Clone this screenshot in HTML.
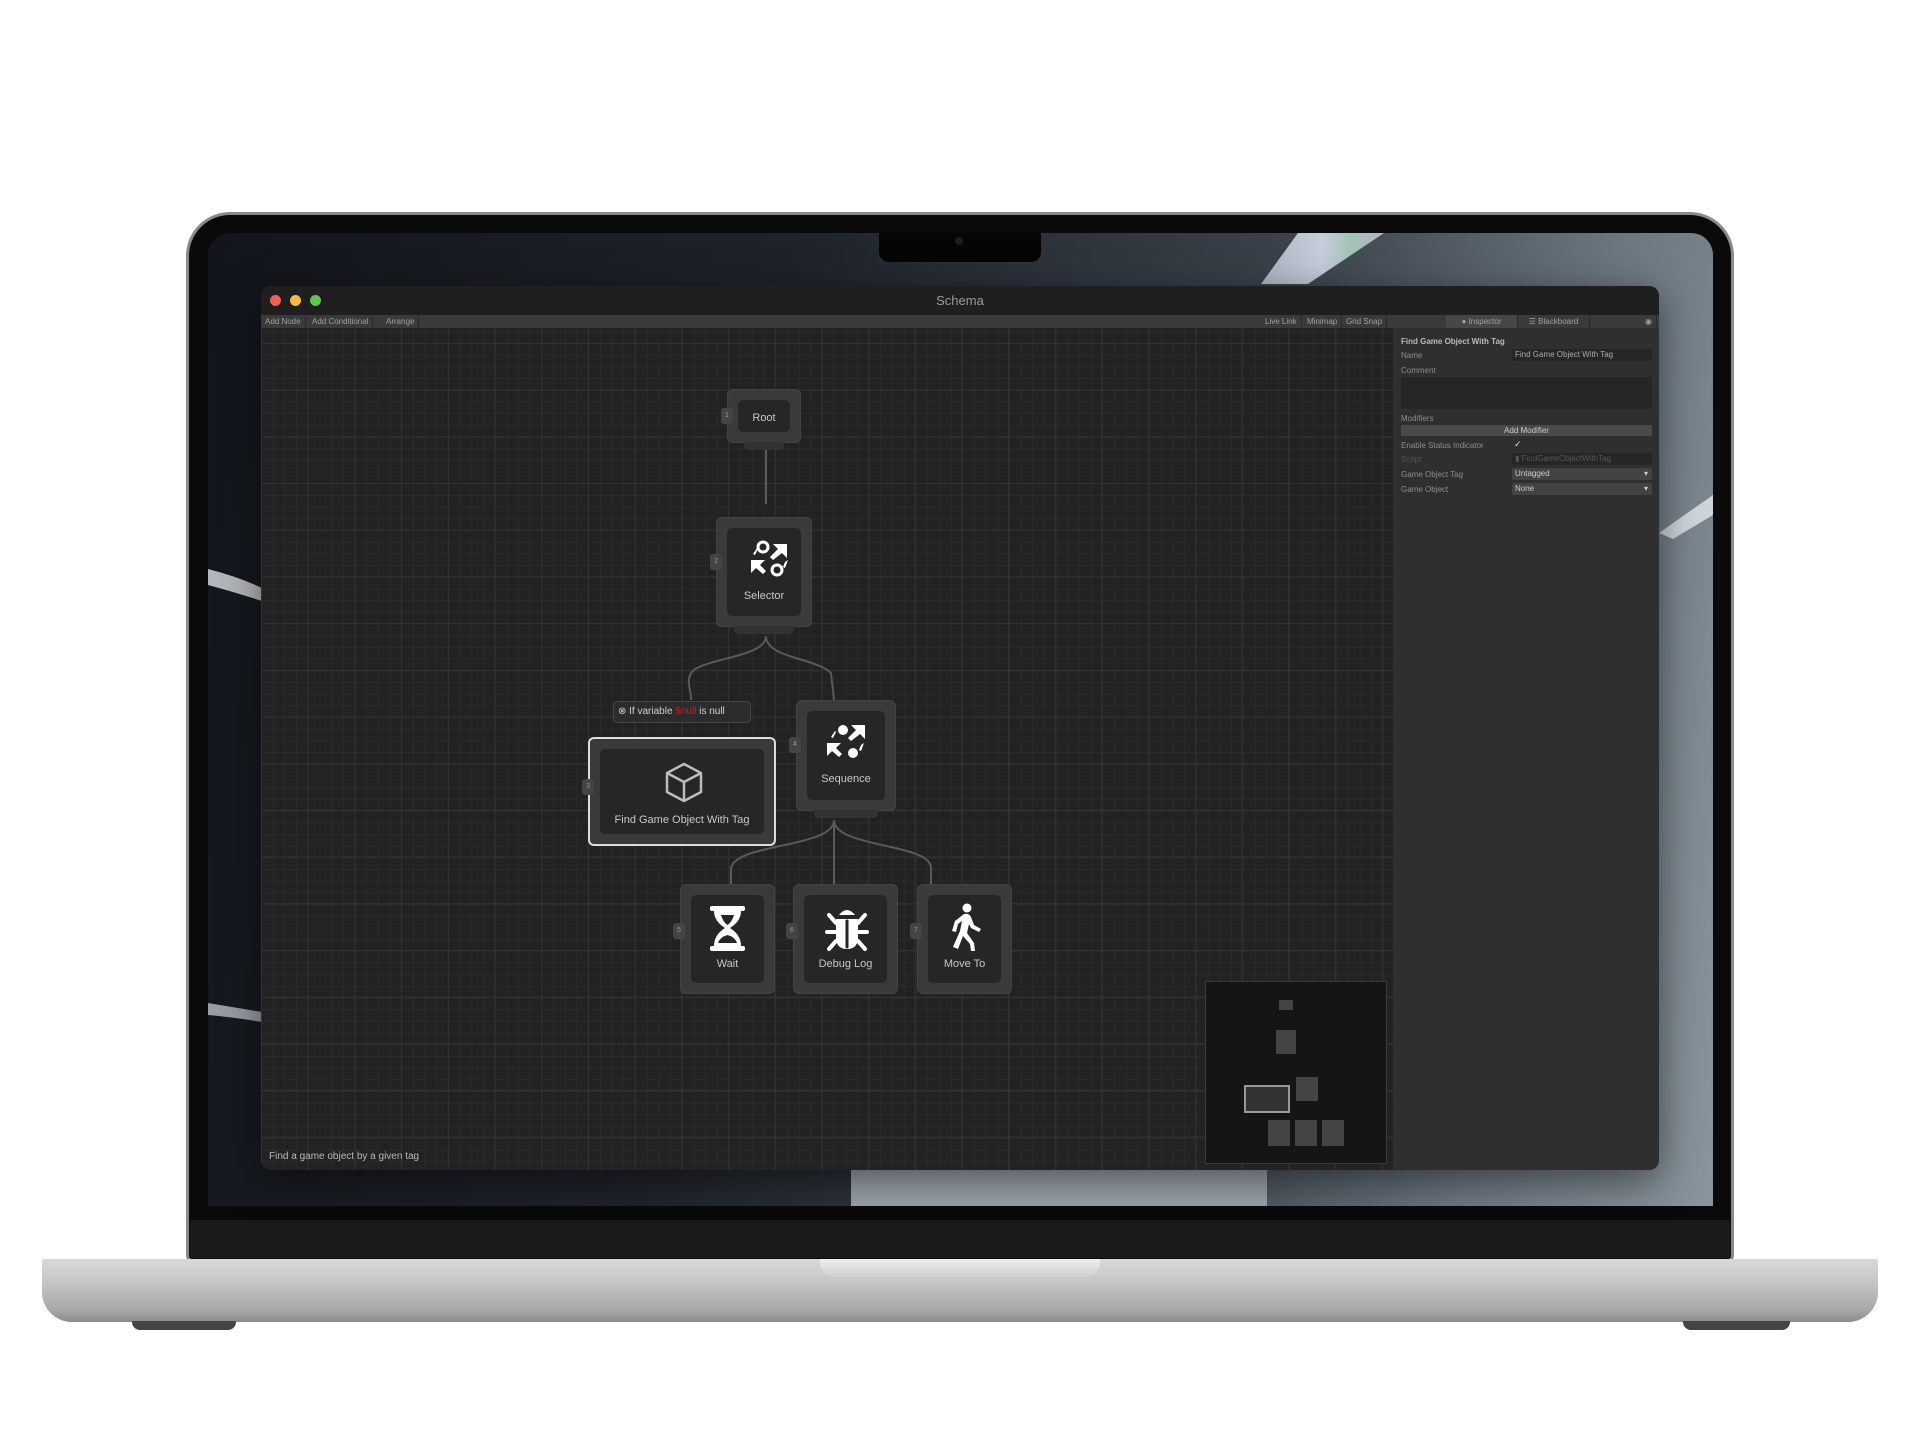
<!DOCTYPE html>
<html><head><meta charset="utf-8"><style>
*{margin:0;padding:0;box-sizing:border-box}
body{width:1920px;height:1440px;background:#fff;position:relative;overflow:hidden;font-family:"Liberation Sans",sans-serif}
.a{position:absolute}
.lid{left:186px;top:212px;width:1548px;height:1050px;background:#0a0a0a;border-radius:44px 44px 6px 6px;border:3px solid #8a8a8a}
.screen{left:208px;top:233px;width:1505px;height:973px;background:linear-gradient(100deg,#12161c 0%,#1e232a 35%,#3a424b 65%,#6d7882 85%,#8a959d 100%);border-radius:22px 22px 0 0;overflow:hidden}
.chin{left:190px;top:1220px;width:1540px;height:38px;background:#1a1a1a}
.base{left:42px;top:1259px;width:1836px;height:63px;background:linear-gradient(#d9d9d9,#c4c4c4 40%,#a8a8a8 80%,#8c8c8c);border-radius:2px 2px 30px 30px}
.win{left:261px;top:286px;width:1398px;height:884px;background:#2a2a2a;border-radius:10px;overflow:hidden;box-shadow:0 10px 40px rgba(0,0,0,.5)}
.title{left:0;top:0;width:1398px;height:29px;background:#1f1f1f;color:#9a9a9a;font-size:13px;text-align:center;line-height:29px}
.tb{top:29px;height:13px;background:#3a3a3a;width:1398px;left:0}
.tb span{position:absolute;top:0;font-size:8px;color:#a0a0a0;line-height:13px;padding:0 4px;border-right:1px solid #2a2a2a}
.canvas{left:0;top:42px;width:1132px;height:842px;background-color:#222;
background-image:linear-gradient(#333 1px,transparent 1px),linear-gradient(90deg,#333 1px,transparent 1px),linear-gradient(#2a2a2a 1px,transparent 1px),linear-gradient(90deg,#2a2a2a 1px,transparent 1px);
background-size:46.7px 46.7px,46.7px 46.7px,11.7px 11.7px,11.7px 11.7px;background-position:0 15px,0 0,0 15px,0 0}
.insp{left:1132px;top:42px;width:266px;height:842px;background:#2f2f2f;color:#9a9a9a;font-size:8px}
.node{position:absolute;background:#3a3a3a;border-radius:6px;border:1px solid #444}
.node .in{position:absolute;left:10px;top:10px;right:10px;bottom:10px;background:#262626;border-radius:5px;color:#c8c8c8;font-size:11px;text-align:center}
.badge{position:absolute;width:12px;height:16px;background:#444;border-radius:3px;color:#999;font-size:7px;line-height:16px;text-align:center}
.lbl{position:absolute;left:0;right:0;text-align:center}
.tab{position:absolute;bottom:-8px;left:50%;transform:translateX(-50%);height:8px;background:#333;border-radius:0 0 4px 4px}
.row{position:absolute;left:8px;font-size:8px;color:#8c8c8c}
.field{position:absolute;left:119px;width:140px;height:12px;background:#262626;border-radius:2px;color:#aaa;font-size:8px;line-height:12px;padding-left:3px}
.dd{background:#434343;color:#ccc}
</style></head><body>
<div class="a lid"></div>
<div class="a screen">
 <svg class="a" style="left:0;top:0" width="1505" height="973">
  <defs><linearGradient id="rb" x1="0" x2="1"><stop offset="0" stop-color="#c9d3e0"/><stop offset=".5" stop-color="#e8f0ff"/><stop offset=".75" stop-color="#b8e0c8"/><stop offset="1" stop-color="#e0c8e8"/></linearGradient></defs>
  <path d="M0 336 Q35 345 60 358 L60 370 Q30 360 0 352Z" fill="#d0d4d8" opacity=".85"/>
  <path d="M0 770 Q30 775 60 780 L60 790 Q25 784 0 782Z" fill="#b8bec4" opacity=".8"/>
  <path d="M1090 0 L1176 0 L1100 51 L1053 51Z" fill="url(#rb)" opacity=".8"/>
  <path d="M1451 300 L1505 262 L1505 282 L1465 306Z" fill="#dde2e6" opacity=".85"/>
  <rect x="643" y="936" width="416" height="37" fill="#9aa3ab"/>
 </svg>
</div>
<div class="a" style="left:879px;top:233px;width:162px;height:29px;background:#050505;border-radius:0 0 10px 10px"></div>
<div class="a" style="left:955px;top:237px;width:8px;height:8px;border-radius:50%;background:#1a1d22"></div>
<div class="a chin"></div>
<div class="a base"></div>
<div class="a" style="left:820px;top:1259px;width:280px;height:18px;background:linear-gradient(#eee,#cfcfcf);border-radius:0 0 14px 14px"></div>
<div class="a" style="left:132px;top:1321px;width:104px;height:9px;background:#444;border-radius:0 0 8px 8px"></div>
<div class="a" style="left:1683px;top:1321px;width:107px;height:9px;background:#444;border-radius:0 0 8px 8px"></div>

<div class="a win">
 <div class="a title">Schema</div>
 <div class="a" style="left:9px;top:9px;width:11px;height:11px;border-radius:50%;background:#ed5f57"></div>
 <div class="a" style="left:29px;top:9px;width:11px;height:11px;border-radius:50%;background:#f4bb3f"></div>
 <div class="a" style="left:49px;top:9px;width:11px;height:11px;border-radius:50%;background:#5fc453"></div>
 <div class="a tb">
  <span style="left:0">Add Node</span><span style="left:47px">Add Conditional</span><span style="left:121px">Arrange</span>
  <span style="left:1000px">Live Link</span><span style="left:1042px">Minimap</span><span style="left:1081px">Grid Snap</span>
  <span style="left:1185px;background:#474747;width:72px;text-align:center">● Inspector</span><span style="left:1257px;width:72px;text-align:center">☰ Blackboard</span><span style="left:1380px">◉</span>
 </div>
 <div class="a canvas">
  <svg class="a" style="left:0;top:0" width="1132" height="842" fill="none" stroke="#5a5a5a" stroke-width="2">
   <path d="M505 116 V176"/>
   <path d="M505 308 C505 330 440 330 430 345 C425 355 430 360 430 372 M505 308 C505 330 555 330 570 345 L573 372"/>
   <path d="M573 492 C573 520 475 515 470 540 V556 M573 492 V556 M573 492 C573 520 670 515 670 540 V556"/>
  </svg>
  <div class="node" style="left:466px;top:61px;width:74px;height:54px"><div class="in"><div class="lbl" style="top:12px">Root</div></div><div class="badge" style="left:-7px;top:18px">1</div><div class="tab" style="width:40px"></div></div>
  <div class="node" style="left:455px;top:189px;width:96px;height:110px"><div class="in">
   <svg class="a" style="left:22px;top:12px" width="44" height="44" fill="#fff"><circle cx="14" cy="7" r="5" fill="none" stroke="#fff" stroke-width="3"/><path d="M4 14 L8 8 L9 9 L6 15Z"/><path d="M24 4 H38 V18 L33 13 L24 20 L21 17 L29 9Z"/><path d="M2 20 H16 L11 25 L17 31 L14 34 L7 28 L2 33Z"/><circle cx="28" cy="30" r="5" fill="none" stroke="#fff" stroke-width="3"/><path d="M36 22 L39 20 L36 28 L34 27Z"/></svg>
   <div class="lbl" style="top:62px">Selector</div></div><div class="badge" style="left:-7px;top:36px">2</div><div class="tab" style="width:60px"></div></div>
  <div class="a" style="left:352px;top:373px;width:138px;height:22px;background:#2c2c2c;border:1px solid #444;border-radius:4px;color:#d0d0d0;font-size:10px;line-height:20px;padding-left:4px">⊗ If variable <span style="color:#d11">$null</span> is null</div>
  <div class="node" style="left:327px;top:409px;width:188px;height:109px;border:2px solid #ddd"><div class="in">
   <svg class="a" style="left:62px;top:12px" width="44" height="44" fill="none" stroke="#bbb" stroke-width="2.5" stroke-linejoin="round"><path d="M22 3 L39 12 V31 L22 40 L5 31 V12Z M5 12 L22 21 L39 12 M22 21 V40"/></svg>
   <div class="lbl" style="top:65px">Find Game Object With Tag</div></div><div class="badge" style="left:-8px;top:40px">3</div></div>
  <div class="node" style="left:535px;top:372px;width:100px;height:111px"><div class="in">
   <svg class="a" style="left:18px;top:10px" width="44" height="44" fill="#fff"><circle cx="18" cy="9" r="5"/><path d="M6 16 L10 10 L11 11 L8 17Z"/><path d="M26 4 H40 V18 L35 13 L26 20 L23 17 L31 9Z"/><path d="M2 22 H16 L11 27 L17 33 L14 36 L7 30 L2 35Z"/><circle cx="28" cy="32" r="5"/><path d="M36 24 L39 22 L36 30 L34 29Z"/></svg>
   <div class="lbl" style="top:62px">Sequence</div></div><div class="badge" style="left:-8px;top:36px">4</div><div class="tab" style="width:64px"></div></div>
  <div class="node" style="left:419px;top:556px;width:95px;height:110px"><div class="in">
   <svg class="a" style="left:18px;top:10px" width="38" height="48" fill="#fff"><rect x="1" y="1" width="35" height="5" rx="2"/><rect x="1" y="41" width="35" height="5" rx="2"/><path d="M5 6 H32 Q32 16 21 23 Q32 30 32 41 H5 Q5 30 16 23 Q5 16 5 6Z M12 10 Q14 17 18.5 20 Q23 17 25 10Z M9 38 H28 Q26 32 18.5 30 Q11 32 9 38Z" fill-rule="evenodd"/></svg>
   <div class="lbl" style="top:63px">Wait</div></div><div class="badge" style="left:-8px;top:38px">5</div></div>
  <div class="node" style="left:532px;top:556px;width:105px;height:110px"><div class="in">
   <svg class="a" style="left:20px;top:10px" width="46" height="48" fill="#fff" stroke="#fff" stroke-width="4" stroke-linecap="round"><path d="M15 10 Q23 0 31 10Z" stroke-width="0"/><path d="M12 14 H34 V32 Q34 44 23 44 Q12 44 12 32Z" stroke-width="0"/><path d="M5 10 L12 18 M41 10 L34 18 M3 27 H12 M43 27 H34 M5 44 L12 36 M41 44 L34 36"/><path d="M23 16 V42" stroke="#262626" stroke-width="3"/></svg>
   <div class="lbl" style="top:63px">Debug Log</div></div><div class="badge" style="left:-8px;top:38px">6</div></div>
  <div class="node" style="left:656px;top:556px;width:95px;height:110px"><div class="in">
   <svg class="a" style="left:20px;top:8px" width="36" height="50" fill="#fff"><circle cx="19" cy="5" r="4.5"/><path d="M16 11 Q21 10 23 14 L26 22 L33 26 L31 29 L23 25 L21 21 L19 30 L26 40 L27 48 L23 48 L22 41 L15 33 L10 46 L5 44 L12 28 L14 18 L10 21 L8 29 L4 28 L7 18Z"/></svg>
   <div class="lbl" style="top:63px">Move To</div></div><div class="badge" style="left:-8px;top:38px">7</div></div>
  <div class="a" style="left:944px;top:653px;width:182px;height:183px;background:#151515;border:1px solid #3a3a3a">
   <div class="a" style="left:73px;top:18px;width:14px;height:10px;background:#444"></div>
   <div class="a" style="left:70px;top:48px;width:20px;height:24px;background:#444"></div>
   <div class="a" style="left:38px;top:103px;width:46px;height:28px;background:#333;border:2px solid #999"></div>
   <div class="a" style="left:90px;top:95px;width:22px;height:24px;background:#444"></div>
   <div class="a" style="left:62px;top:138px;width:22px;height:26px;background:#444"></div>
   <div class="a" style="left:89px;top:138px;width:22px;height:26px;background:#444"></div>
   <div class="a" style="left:116px;top:138px;width:22px;height:26px;background:#444"></div>
  </div>
  <div class="a" style="left:8px;top:823px;color:#bbb;font-size:10px">Find a game object by a given tag</div>
 </div>
 <div class="a insp">
  <div class="row" style="top:9px;color:#bbb;font-weight:bold">Find Game Object With Tag</div>
  <div class="row" style="top:23px">Name</div><div class="field" style="top:21px">Find Game Object With Tag</div>
  <div class="row" style="top:38px">Comment</div>
  <div class="a" style="left:8px;top:49px;width:251px;height:32px;background:#262626;border-radius:2px"></div>
  <div class="row" style="top:86px">Modifiers</div>
  <div class="a" style="left:8px;top:97px;width:251px;height:11px;background:#4a4a4a;color:#ccc;font-size:8px;text-align:center;line-height:11px">Add Modifier</div>
  <div class="row" style="top:113px">Enable Status Indicator</div><div class="a" style="top:111px;color:#ddd;font-size:9px;left:121px">✓</div>
  <div class="row" style="top:127px;color:#555">Script</div><div class="field" style="top:125px;color:#555">▮ FindGameObjectWithTag</div>
  <div class="row" style="top:142px">Game Object Tag</div><div class="field dd" style="top:140px">Untagged<span style="float:right;padding-right:4px">▾</span></div>
  <div class="row" style="top:157px">Game Object</div><div class="field dd" style="top:155px">None<span style="float:right;padding-right:4px">▾</span></div>
 </div>
</div>
</body></html>
